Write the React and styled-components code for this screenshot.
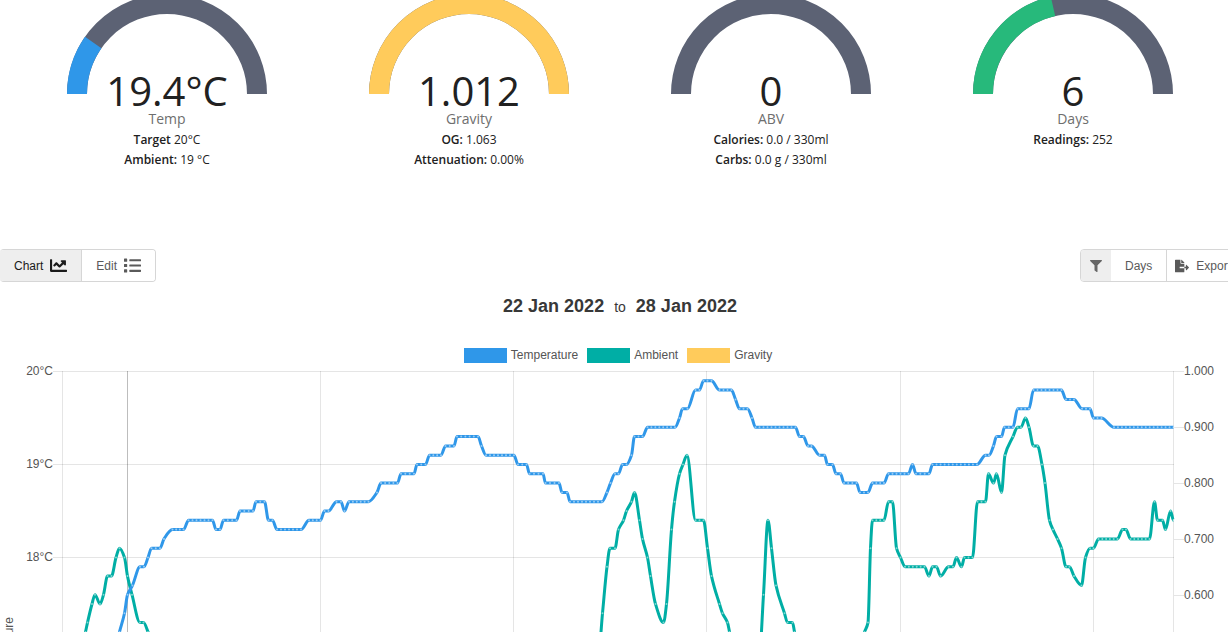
import styled, { createGlobalStyle } from "styled-components";
import { FaChartLine, FaFileExport, FaFilter, FaList } from "react-icons/fa";

const colors = {
  track: "#5c6274",
  blue: "#2f97e9",
  teal: "#00aea5",
  yellow: "#ffcb5b",
  green: "#27b97b",
};

const gauges = [
  {
    label: "Temp",
    value: "19.4°C",
    ratio: 0.194,
    color: colors.blue,
    details: [
      ["Target", "20°C"],
      ["Ambient:", "19 °C"],
    ],
  },
  {
    label: "Gravity",
    value: "1.012",
    ratio: 1,
    color: colors.yellow,
    details: [
      ["OG:", "1.063"],
      ["Attenuation:", "0.00%"],
    ],
  },
  {
    label: "ABV",
    value: "0",
    ratio: 0,
    color: colors.blue,
    details: [
      ["Calories:", "0.0 / 330ml"],
      ["Carbs:", "0.0 g / 330ml"],
    ],
  },
  {
    label: "Days",
    value: "6",
    ratio: 6 / 14,
    color: colors.green,
    details: [["Readings:", "252"]],
  },
];

const legend = [
  { name: "Temperature", color: colors.blue },
  { name: "Ambient", color: colors.teal },
  { name: "Gravity", color: colors.yellow },
];

// [x, degrees] pairs, flat runs only list their two ends
const temperature = [
  [115, 17.0], [119.5, 17.2], [124.5, 17.4], [127.5, 17.6], [132.5, 17.7],
  [140, 17.9], [144, 17.9], [148, 18.0], [151.5, 18.1], [160, 18.1],
  [164, 18.2], [172.5, 18.3], [183.5, 18.3], [188.5, 18.4], [212.5, 18.4],
  [216, 18.3], [220, 18.3], [223.5, 18.4], [236.5, 18.4], [240, 18.5],
  [253, 18.5], [256, 18.6], [264.5, 18.6], [268.5, 18.4], [272.5, 18.4],
  [277, 18.3], [301, 18.3], [309, 18.4], [320.5, 18.4], [324.5, 18.5],
  [328.5, 18.5], [336.5, 18.6], [341, 18.6], [344.5, 18.5], [349, 18.6],
  [368.5, 18.6], [377, 18.7], [381, 18.8], [397.5, 18.8], [401, 18.9],
  [414, 18.9], [417, 19.0], [425.5, 19.0], [429.5, 19.1], [441, 19.1],
  [445.5, 19.2], [454, 19.2], [457, 19.3], [478, 19.3], [481.5, 19.2],
  [486, 19.1], [514, 19.1], [518, 19.0], [526.5, 19.0], [529.5, 18.9],
  [543, 18.9], [545.5, 18.8], [559, 18.8], [562, 18.7], [567, 18.7],
  [570, 18.6], [602, 18.6], [607, 18.7], [610.5, 18.8], [615, 18.9],
  [618.5, 18.9], [622.5, 19.0], [626.5, 19.0], [631.5, 19.1], [634.5, 19.3],
  [642.5, 19.3], [647.5, 19.4], [675, 19.4], [679.5, 19.5], [682.5, 19.6],
  [687.5, 19.6], [695.5, 19.8], [699.5, 19.8], [703.5, 19.9], [711.5, 19.9],
  [719.5, 19.8], [731.5, 19.8], [735.5, 19.7], [739.5, 19.6], [747.5, 19.6],
  [752, 19.5], [755.5, 19.4], [795.5, 19.4], [799.5, 19.3], [803.5, 19.3],
  [808, 19.2], [811.5, 19.2], [819.5, 19.1], [824.5, 19.1], [827.5, 19.0],
  [832.5, 19.0], [836, 18.9], [840.5, 18.9], [844, 18.8], [856.5, 18.8],
  [860, 18.7], [868, 18.7], [872.5, 18.8], [884, 18.8], [888.5, 18.9],
  [908.5, 18.9], [912.5, 19.0], [916, 18.9], [929, 18.9], [932.5, 19.0],
  [977, 19.0], [985.5, 19.1], [989, 19.1], [993.5, 19.2], [996.5, 19.3],
  [1001.5, 19.3], [1004.5, 19.4], [1013, 19.4], [1017.5, 19.6], [1029, 19.6],
  [1033.5, 19.8], [1061.5, 19.8], [1066, 19.7], [1074, 19.7], [1082, 19.6],
  [1090, 19.6], [1093.5, 19.5], [1101.5, 19.5], [1114, 19.4], [1173.5, 19.4],
];

const ambient = [
  [83, 17.1], [85.5, 17.2], [87.5, 17.3], [92, 17.5], [95, 17.6],
  [100, 17.5], [103.5, 17.6], [107.5, 17.8], [111.5, 17.8], [116, 18.0],
  [119.5, 18.1], [124.5, 18.0], [127.5, 17.8], [132, 17.6], [140, 17.3],
  [143.5, 17.3], [148, 17.2], [156, 16.9], [598, 16.9], [602.5, 17.4],
  [607, 17.9], [610, 18.1], [615, 18.1], [618.5, 18.3], [623.5, 18.4],
  [626.5, 18.5], [631.5, 18.6], [634.5, 18.7], [639.5, 18.4], [642.5, 18.2],
  [647.5, 18.0], [650.5, 17.8], [655.5, 17.5], [663.5, 17.3], [666.5, 17.5],
  [671.5, 18.3], [674.5, 18.6], [679.5, 18.9], [683, 19.0], [687, 19.1],
  [695.5, 18.4], [703.5, 18.4], [707.5, 18.1], [711.5, 17.8], [719.5, 17.5],
  [722.5, 17.4], [727.5, 17.3], [729.5, 17.2], [735, 16.9], [759, 16.9],
  [763.5, 17.6], [768, 18.4], [771.5, 18.1], [776, 17.7], [784.5, 17.4],
  [787.5, 17.3], [792.5, 17.3], [794.5, 17.2], [800, 16.9], [856, 16.9],
  [864.5, 17.2], [868, 17.3], [870.5, 18.1], [872.5, 18.4], [884, 18.4],
  [888.5, 18.6], [892.5, 18.6], [896.5, 18.1], [900.5, 18.0], [905, 17.9],
  [924.5, 17.9], [929, 17.8], [932.5, 17.9], [936.5, 17.9], [940.5, 17.8],
  [948.5, 17.9], [953, 17.9], [956.5, 18.0], [961.5, 17.9], [964.5, 18.0],
  [972.5, 18.0], [977.5, 18.6], [985.5, 18.6], [988.5, 18.9], [993.5, 18.8],
  [996.5, 18.9], [1001.5, 18.7], [1005, 19.1], [1013, 19.3], [1017.5, 19.4],
  [1021, 19.4], [1025.5, 19.5], [1029, 19.4], [1033.5, 19.2], [1037.5, 19.2],
  [1042, 19.0], [1045, 18.8], [1049.5, 18.4], [1053, 18.3], [1057.5, 18.2],
  [1061.5, 18.1], [1066, 17.9], [1069.5, 17.9], [1074, 17.8], [1081.5, 17.7],
  [1085.5, 18.0], [1090, 18.1], [1093.5, 18.1], [1098.5, 18.2], [1117.5, 18.2],
  [1122.5, 18.3], [1126, 18.3], [1130.5, 18.2], [1149.5, 18.2], [1154.5, 18.6],
  [1157.5, 18.4], [1162.5, 18.4], [1165.5, 18.3], [1170.5, 18.5], [1173.5, 18.4],
];

const TOP = 7.5;
const DEGREE = 93;
const toY = (degrees) => TOP + (20 - degrees) * DEGREE;

// turn the pairs into plotted points, with a reading every 4px on flat runs
const toPoints = (data) => {
  const points = [];
  data.forEach(([x, degrees], i) => {
    points.push([x, toY(degrees)]);
    const next = data[i + 1];
    if (next && next[1] === degrees) {
      const count = Math.round((next[0] - x) / 4);
      for (let n = 1; n < count; n++) {
        points.push([x + ((next[0] - x) * n) / count, toY(degrees)]);
      }
    }
  });
  return points;
};

// monotone cubic curve, so that steps never overshoot
const toPath = (points) => {
  const slope = (a, b) => (b[1] - a[1]) / (b[0] - a[0]);
  const tangents = points.map((p, i) => {
    if (i === 0 || i === points.length - 1) return 0;
    const before = slope(points[i - 1], p);
    const after = slope(p, points[i + 1]);
    if (before * after <= 0) return 0;
    return (2 * before * after) / (before + after);
  });
  return points.reduce((d, p, i) => {
    if (i === 0) return `M${p[0]},${p[1]}`;
    const q = points[i - 1];
    const h = (p[0] - q[0]) / 3;
    return `${d}C${q[0] + h},${q[1] + h * tangents[i - 1]} ${p[0] - h},${
      p[1] - h * tangents[i]
    } ${p[0]},${p[1]}`;
  }, "");
};

const Gauge = ({ label, value, ratio, color, details }) => {
  const angle = Math.PI * (1 - ratio);
  const x = 100 + 90 * Math.cos(angle);
  const y = 100 - 90 * Math.sin(angle);

  return (
    <GaugeWrapper>
      <svg width="200" height="94" viewBox="0 6 200 94" aria-hidden="true">
        <path
          d="M10,100A90,90 0 0 1 190,100"
          fill="none"
          stroke={colors.track}
          strokeWidth="20"
        />
        {ratio > 0 && (
          <path
            d={`M10,100A90,90 0 0 1 ${x},${y}`}
            fill="none"
            stroke={color}
            strokeWidth="20"
          />
        )}
      </svg>
      <GaugeValue>{value}</GaugeValue>
      <GaugeLabel>{label}</GaugeLabel>
      {details.map(([name, text]) => (
        <GaugeDetail key={name}>
          <b>{name}</b> {text}
        </GaugeDetail>
      ))}
    </GaugeWrapper>
  );
};

const Series = ({ data, color }) => {
  const points = toPoints(data);
  return (
    <g>
      <path
        d={toPath(points)}
        fill="none"
        stroke={color}
        strokeWidth="3"
        strokeLinejoin="round"
      />
      {points.map(([x, y]) => (
        <circle key={x} cx={x} cy={y} r="1" fill="#fff" fillOpacity="0.5" />
      ))}
    </g>
  );
};

const Chart = () => {
  const days = [62.5, 320.5, 513.5, 706.5, 900.5, 1093.5, 1173.5];
  const degrees = [20, 19, 18, 17];
  const gravities = ["1.000", "0.900", "0.800", "0.700", "0.600", "0.500"];

  return (
    <ChartSvg viewBox="0 0 1240 320" role="img" aria-label="Readings">
      <g stroke="#000" strokeOpacity="0.1">
        {days.map((x) => (
          <path key={x} d={`M${x},7V320`} />
        ))}
        {degrees.map((d) => (
          <path key={d} d={`M53,${toY(d)}H1174`} />
        ))}
        {gravities.map((g, i) => (
          <path key={g} d={`M1174,${TOP + i * 56}H1184`} />
        ))}
      </g>
      <path d="M127.5,7V320" stroke="#000" strokeOpacity="0.26" />
      <Series data={ambient} color={colors.teal} />
      <Series data={temperature} color={colors.blue} />
      {degrees.map((d) => (
        <text key={d} x="53" y={toY(d) + 3.5} textAnchor="end">
          {d}°C
        </text>
      ))}
      {gravities.map((g, i) => (
        <text key={g} x="1184" y={TOP + i * 56 + 3.5}>
          {g}
        </text>
      ))}
      <text transform="translate(13 253) rotate(-90)" textAnchor="end">
        Temperature
      </text>
    </ChartSvg>
  );
};

const App = () => {
  return (
    <Page>
      <GlobalStyle />
      <Content>
        <Gauges>
          {gauges.map((gauge) => (
            <Gauge key={gauge.label} {...gauge} />
          ))}
        </Gauges>
        <Toolbar>
          <ButtonGroup $flush>
            <Button $active $pad={14}>
              Chart <FaChartLine size={17} />
            </Button>
            <Button $pad={14}>
              Edit <FaList size={17} />
            </Button>
          </ButtonGroup>
          <ButtonGroup>
            <FilterButton aria-label="Filter">
              <FaFilter size={12} />
            </FilterButton>
            <Button $pad={14}>Days</Button>
            <Button $pad={8}>
              <FaFileExport size={14} /> Export
            </Button>
          </ButtonGroup>
        </Toolbar>
        <Range>
          <strong>22 Jan 2022</strong>
          <span>to</span>
          <strong>28 Jan 2022</strong>
        </Range>
        <Legend>
          {legend.map(({ name, color }) => (
            <LegendItem key={name} $color={color}>
              {name}
            </LegendItem>
          ))}
        </Legend>
        <Chart />
      </Content>
    </Page>
  );
};

const GlobalStyle = createGlobalStyle`
  * {
    box-sizing: border-box;
  }

  body {
    margin: 0;
    background: #fff;
    color: #212121;
    font-family: "Liberation Sans", Arial, sans-serif;
    font-size: 12px;
  }
`;

const Page = styled.main`
  height: 100vh;
  overflow: hidden;
`;

/* the dashboard runs a little past the right edge of the window */
const Content = styled.div`
  margin-right: -12px;
`;

const Gauges = styled.section`
  display: grid;
  grid-template-columns: repeat(4, 1fr);
  min-height: 249px;
  padding: 0 16px;
`;

const GaugeWrapper = styled.div`
  display: flex;
  flex-direction: column;
  align-items: center;
  font-family: "Open Sans", sans-serif;
`;

const GaugeValue = styled.div`
  margin-top: -21px;
  font-size: 40px;
  line-height: 36px;
`;

const GaugeLabel = styled.div`
  margin-bottom: 1px;
  color: #6e6e6e;
  font-size: 14px;
  font-weight: 500;
  line-height: 20px;
`;

const GaugeDetail = styled.div`
  line-height: 20px;

  b {
    font-weight: 600;
  }
`;

const Toolbar = styled.div`
  display: flex;
  justify-content: space-between;
`;

const ButtonGroup = styled.div`
  display: flex;
  height: 33px;
  overflow: hidden;
  border: 1px solid #d6d6d6;
  border-left-width: ${({ $flush }) => ($flush ? 0 : "1px")};
  border-radius: 4px;
`;

const Button = styled.button`
  display: flex;
  align-items: center;
  gap: 7px;
  padding: 0 ${({ $pad }) => $pad}px;
  border: 0;
  background: ${({ $active }) => ($active ? "#eee" : "#fff")};
  color: ${({ $active }) => ($active ? "#1a1a1a" : "#5a5a5a")};
  font: inherit;
  cursor: pointer;

  & + & {
    border-left: 1px solid #d6d6d6;
  }
`;

const FilterButton = styled.button`
  display: flex;
  align-items: center;
  justify-content: center;
  width: 30px;
  padding: 0;
  border: 0;
  background: #eee;
  color: #666;
  cursor: pointer;
`;

const Range = styled.div`
  display: flex;
  align-items: baseline;
  justify-content: center;
  gap: 10px;
  margin-top: 12px;
  color: #383838;
  font-size: 14px;
  line-height: 24px;

  strong {
    font-size: 18px;
  }
`;

const Legend = styled.div`
  display: flex;
  justify-content: center;
  gap: 9px;
  margin-top: 29px;
  margin-bottom: 1px;
  padding-right: 4px;
  color: #555;
`;

const LegendItem = styled.div`
  display: flex;
  align-items: center;
  gap: 4px;
  line-height: 15px;

  &::before {
    content: "";
    width: 43px;
    height: 15px;
    background: ${({ $color }) => $color};
  }
`;

const ChartSvg = styled.svg`
  display: block;
  width: 100%;

  text {
    fill: #555;
    font-size: 12px;
  }
`;

export default App;
